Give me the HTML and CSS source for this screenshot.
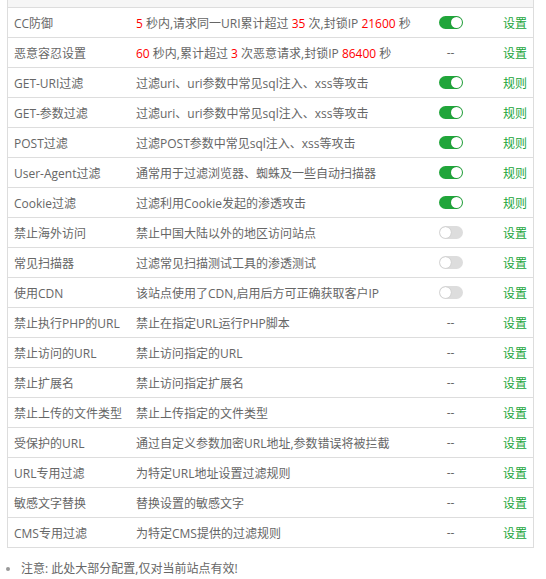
FILE: index.html
```html
<!DOCTYPE html>
<html lang="zh-CN">
<head>
  <meta charset="UTF-8" />
  <title>网站防火墙</title>
  <link rel="stylesheet" href="styles.css">
</head>
<body>
  <div class="waf-table">
    <div class="head"></div>

    <div class="row">
      <div class="c-name">CC防御</div>
      <div class="c-desc"><span class="red">5</span> 秒内,请求同一URI累计超过 <span class="red">35</span> 次,封锁IP <span class="red">21600</span> 秒</div>
      <div class="c-state"><span class="switch on"></span></div>
      <div class="c-act"><a href="#">设置</a></div>
    </div>
    <div class="row">
      <div class="c-name">恶意容忍设置</div>
      <div class="c-desc"><span class="red">60</span> 秒内,累计超过 <span class="red">3</span> 次恶意请求,封锁IP <span class="red">86400</span> 秒</div>
      <div class="c-state">--</div>
      <div class="c-act"><a href="#">设置</a></div>
    </div>
    <div class="row">
      <div class="c-name">GET-URI过滤</div>
      <div class="c-desc">过滤uri、uri参数中常见sql注入、xss等攻击</div>
      <div class="c-state"><span class="switch on"></span></div>
      <div class="c-act"><a href="#">规则</a></div>
    </div>
    <div class="row">
      <div class="c-name">GET-参数过滤</div>
      <div class="c-desc">过滤uri、uri参数中常见sql注入、xss等攻击</div>
      <div class="c-state"><span class="switch on"></span></div>
      <div class="c-act"><a href="#">规则</a></div>
    </div>
    <div class="row">
      <div class="c-name">POST过滤</div>
      <div class="c-desc">过滤POST参数中常见sql注入、xss等攻击</div>
      <div class="c-state"><span class="switch on"></span></div>
      <div class="c-act"><a href="#">规则</a></div>
    </div>
    <div class="row">
      <div class="c-name">User-Agent过滤</div>
      <div class="c-desc">通常用于过滤浏览器、蜘蛛及一些自动扫描器</div>
      <div class="c-state"><span class="switch on"></span></div>
      <div class="c-act"><a href="#">规则</a></div>
    </div>
    <div class="row">
      <div class="c-name">Cookie过滤</div>
      <div class="c-desc">过滤利用Cookie发起的渗透攻击</div>
      <div class="c-state"><span class="switch on"></span></div>
      <div class="c-act"><a href="#">规则</a></div>
    </div>
    <div class="row">
      <div class="c-name">禁止海外访问</div>
      <div class="c-desc">禁止中国大陆以外的地区访问站点</div>
      <div class="c-state"><span class="switch"></span></div>
      <div class="c-act"><a href="#">设置</a></div>
    </div>
    <div class="row">
      <div class="c-name">常见扫描器</div>
      <div class="c-desc">过滤常见扫描测试工具的渗透测试</div>
      <div class="c-state"><span class="switch"></span></div>
      <div class="c-act"><a href="#">设置</a></div>
    </div>
    <div class="row">
      <div class="c-name">使用CDN</div>
      <div class="c-desc">该站点使用了CDN,启用后方可正确获取客户IP</div>
      <div class="c-state"><span class="switch"></span></div>
      <div class="c-act"><a href="#">设置</a></div>
    </div>
    <div class="row">
      <div class="c-name">禁止执行PHP的URL</div>
      <div class="c-desc">禁止在指定URL运行PHP脚本</div>
      <div class="c-state">--</div>
      <div class="c-act"><a href="#">设置</a></div>
    </div>
    <div class="row">
      <div class="c-name">禁止访问的URL</div>
      <div class="c-desc">禁止访问指定的URL</div>
      <div class="c-state">--</div>
      <div class="c-act"><a href="#">设置</a></div>
    </div>
    <div class="row">
      <div class="c-name">禁止扩展名</div>
      <div class="c-desc">禁止访问指定扩展名</div>
      <div class="c-state">--</div>
      <div class="c-act"><a href="#">设置</a></div>
    </div>
    <div class="row">
      <div class="c-name">禁止上传的文件类型</div>
      <div class="c-desc">禁止上传指定的文件类型</div>
      <div class="c-state">--</div>
      <div class="c-act"><a href="#">设置</a></div>
    </div>
    <div class="row">
      <div class="c-name">受保护的URL</div>
      <div class="c-desc">通过自定义参数加密URL地址,参数错误将被拦截</div>
      <div class="c-state">--</div>
      <div class="c-act"><a href="#">设置</a></div>
    </div>
    <div class="row">
      <div class="c-name">URL专用过滤</div>
      <div class="c-desc">为特定URL地址设置过滤规则</div>
      <div class="c-state">--</div>
      <div class="c-act"><a href="#">设置</a></div>
    </div>
    <div class="row">
      <div class="c-name">敏感文字替换</div>
      <div class="c-desc">替换设置的敏感文字</div>
      <div class="c-state">--</div>
      <div class="c-act"><a href="#">设置</a></div>
    </div>
    <div class="row">
      <div class="c-name">CMS专用过滤</div>
      <div class="c-desc">为特定CMS提供的过滤规则</div>
      <div class="c-state">--</div>
      <div class="c-act"><a href="#">设置</a></div>
    </div>
  </div>

  <ul class="help">
    <li>注意: 此处大部分配置,仅对当前站点有效!</li>
  </ul>
</body>
</html>
```

FILE: styles.css
```css
body {
  margin: 0;
  background-color: #fff;
  color: #666;
  font-family: "Open Sans", "Noto Sans CJK SC", sans-serif;
  font-size: 12px;
}
.waf-table {
  width: 525px;
  margin-left: 7px;
  border-left: 1px solid #ddd;
  border-right: 1px solid #ddd;
}
.head {
  height: 7px;
  background-color: #f6f6f6;
  border-bottom: 1px solid #ddd;
}
.row {
  display: flex;
  align-items: center;
  height: 29px;
  border-bottom: 1px solid #ddd;
}
.c-name {
  width: 122px;
  padding-left: 6px;
}
.c-desc {
  flex: 1;
  white-space: nowrap;
}
.c-state {
  width: 61px;
  display: flex;
  justify-content: center;
  color: #666;
}
.c-act {
  width: 46px;
  padding-right: 6px;
  text-align: right;
}
.c-act a {
  color: #20a53a;
  text-decoration: none;
}
.red {
  color: #ff0000;
}
.switch {
  position: relative;
  display: block;
  width: 24px;
  height: 13px;
  border-radius: 7px;
  background-color: #ddd;
}
.switch::after {
  content: "";
  position: absolute;
  top: 1px;
  left: 1px;
  width: 11px;
  height: 11px;
  border-radius: 50%;
  background-color: #fff;
  box-shadow: 0 0 1px rgba(0, 0, 0, 0.3);
}
.switch.on {
  background-color: #20a53a;
}
.switch.on::after {
  left: 12px;
}
.help {
  margin: 11px 0 0;
  padding-left: 21px;
  line-height: 20px;
  color: #666;
}
.help li {
  list-style: disc;
}
.help li::marker {
  color: #999;
}
```
